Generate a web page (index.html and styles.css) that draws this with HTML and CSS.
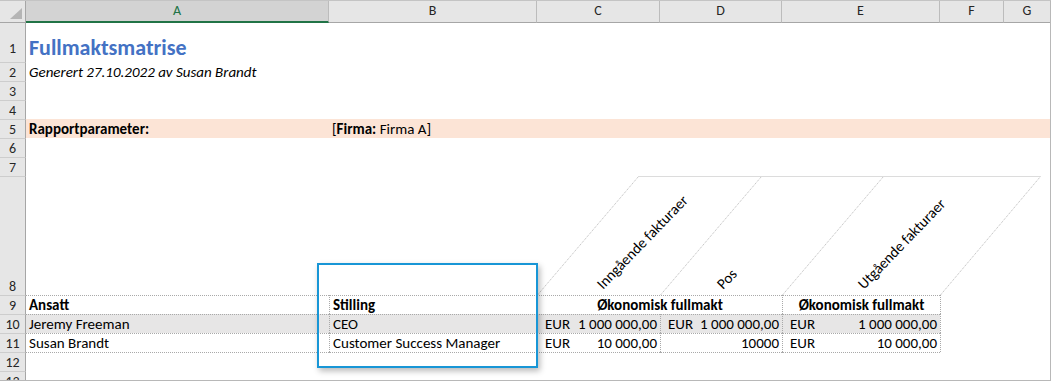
FILE: index.html
```html
<!DOCTYPE html>
<html lang="no">
<head>
<meta charset="utf-8">
<title>Fullmaktsmatrise</title>
<link rel="stylesheet" href="styles.css">
</head>
<body>
<div class="sheet">
  <div class="row hdr">
    <div class="corner"><span class="tri"></span></div>
    <div class="ch sel">A</div>
    <div class="ch">B</div>
    <div class="ch">C</div>
    <div class="ch">D</div>
    <div class="ch">E</div>
    <div class="ch">F</div>
    <div class="ch last">G</div>
  </div>

  <div class="row r1">
    <div class="rh first">1</div>
    <div class="c title span-rest">Fullmaktsmatrise</div>
  </div>
  <div class="row">
    <div class="rh">2</div>
    <div class="c italic span-rest">Generert 27.10.2022 av Susan Brandt</div>
  </div>
  <div class="row">
    <div class="rh">3</div>
  </div>
  <div class="row">
    <div class="rh">4</div>
  </div>
  <div class="row peach">
    <div class="rh">5</div>
    <div class="c bold">Rapportparameter:</div>
    <div class="c span-b-rest">[<b>Firma:</b>&nbsp;Firma A]</div>
  </div>
  <div class="row">
    <div class="rh">6</div>
  </div>
  <div class="row">
    <div class="rh">7</div>
  </div>
  <div class="row r8">
    <div class="rh">8</div>
    <div class="c"></div>
    <div class="c"></div>
    <svg class="diag" width="513" height="119" viewBox="0 0 513 119">
      <g class="dl">
        <line x1="0.5" y1="119" x2="101.5" y2="0.5"/>
        <line x1="123.5" y1="119" x2="224.5" y2="0.5"/>
        <line x1="245.5" y1="119" x2="346.5" y2="0.5"/>
        <line x1="403.5" y1="119" x2="503.5" y2="0.5"/>
        <line x1="101.5" y1="0.5" x2="503.5" y2="0.5"/>
      </g>
      <text x="66" y="114" transform="rotate(-46 66 114)">Inngående fakturaer</text>
      <text x="186" y="114" transform="rotate(-46 186 114)">Pos</text>
      <text x="327" y="114" transform="rotate(-46 327 114)">Utgående fakturaer</text>
    </svg>
  </div>
  <div class="row r9 tbl">
    <div class="rh">9</div>
    <div class="c bold ta">Ansatt</div>
    <div class="c bold ta bl">Stilling</div>
    <div class="c bold ta bl center span-cd">Økonomisk fullmakt</div>
    <div class="c bold ta bl center">Økonomisk fullmakt</div>
    <div class="c bl"></div>
  </div>
  <div class="row tbl grey">
    <div class="rh">10</div>
    <div class="c ta g">Jeremy Freeman</div>
    <div class="c ta bl g">CEO</div>
    <div class="c ta bl g m"><span>EUR</span><span>1 000 000,00</span></div>
    <div class="c ta bl g m"><span>EUR</span><span>1 000 000,00</span></div>
    <div class="c ta bl g m"><span>EUR</span><span>1 000 000,00</span></div>
    <div class="c bl"></div>
  </div>
  <div class="row tbl">
    <div class="rh">11</div>
    <div class="c ta">Susan Brandt</div>
    <div class="c ta bl">Customer Success Manager</div>
    <div class="c ta bl m"><span>EUR</span><span>10 000,00</span></div>
    <div class="c ta bl m"><span></span><span>10000</span></div>
    <div class="c ta bl m"><span>EUR</span><span>10 000,00</span></div>
    <div class="c bl"></div>
  </div>
  <div class="row">
    <div class="rh">12</div>
    <div class="c ta"></div>
    <div class="c ta"></div>
    <div class="c ta"></div>
    <div class="c ta"></div>
    <div class="c ta"></div>
  </div>
  <div class="row">
    <div class="rh">13</div>
  </div>

  <div class="highlight"></div>
</div>
</body>
</html>
```

FILE: styles.css
```css
:root {
  --cols: 26px 303px 208px 123px 122px 158px 64px 46px;
  --dot: #a9a9a9;
}

html, body {
  margin: 0;
  padding: 0;
  background: #ffffff;
}

.sheet {
  position: relative;
  width: 1051px;
  height: 381px;
  box-sizing: border-box;
  border-top: 1px solid #c4c4c4;
  border-right: 1px solid #b8b8b8;
  border-bottom: 1px solid #b8b8b8;
  overflow: hidden;
  font-family: Calibri, Carlito, Lato, "Liberation Sans", sans-serif;
  font-size: 15px;
  color: #000;
}

.row {
  display: grid;
  grid-template-columns: var(--cols);
  height: 19px;
}

.hdr {
  height: 21px;
}

.r1 { height: 40px; }
.r8 { height: 119px; }

/* column header */
.corner {
  position: relative;
  background: #e6e6e6;
  border-right: 1px solid #a6a6a6;
  border-bottom: 1px solid #a6a6a6;
  box-sizing: border-box;
}

.tri {
  position: absolute;
  right: 3px;
  bottom: 3px;
  width: 0;
  height: 0;
  border-left: 12px solid transparent;
  border-bottom: 11px solid #b5b5b5;
}

.ch {
  background: #e6e6e6;
  border-right: 1px solid #bcbcbc;
  border-bottom: 1px solid #a6a6a6;
  box-sizing: border-box;
  text-align: center;
  font-size: 14px;
  line-height: 20px;
  color: #262626;
}

.ch.last {
  border-right: none;
}

.ch.sel {
  background: #d3d3d3;
  color: #217346;
  border-bottom: 2px solid #217346;
}

/* row header */
.rh {
  display: flex;
  align-items: flex-end;
  justify-content: center;
  background: #e6e6e6;
  border-right: 1px solid #a6a6a6;
  border-top: 1px solid #cdcdcd;
  box-sizing: border-box;
  font-size: 14px;
  line-height: 17px;
  color: #262626;
}

.rh.first {
  border-top: none;
  padding-bottom: 5px;
}

/* cells */
.c {
  display: flex;
  align-items: flex-end;
  min-width: 0;
  padding: 0 3px 0 3px;
  box-sizing: border-box;
  white-space: nowrap;
  line-height: 18px;
}

.span-rest {
  grid-column: 2 / -1;
}

.span-b-rest {
  grid-column: 3 / -1;
}

.span-cd {
  grid-column: 4 / 6;
}

.title {
  font-size: 22px;
  font-weight: bold;
  color: #4472c4;
  line-height: 26px;
  padding-bottom: 1px;
}

.italic {
  font-style: italic;
}

.bold {
  font-weight: bold;
}

.peach .c {
  background: #fce4d6;
}

.ta {
  border-top: 1px dotted var(--dot);
}

.bl {
  border-left: 1px dotted var(--dot);
}

.center {
  justify-content: center;
}

.g {
  background: #e7e6e6;
}

.m {
  justify-content: space-between;
  padding-left: 7px;
}

/* rotated headers */
.diag {
  grid-column: 4 / 9;
  overflow: visible;
  display: block;
}

.dl line {
  stroke: #b9b9b9;
  stroke-width: 1;
  stroke-dasharray: 1 1;
}

.diag text {
  font-family: Calibri, Carlito, Lato, "Liberation Sans", sans-serif;
  font-size: 15px;
  fill: #000;
}

/* highlight frame */
.highlight {
  position: absolute;
  left: 317px;
  top: 262px;
  width: 221px;
  height: 105px;
  box-sizing: border-box;
  border: 2px solid #1896d6;
  box-shadow: 2px 3px 6px rgba(0, 0, 0, 0.28);
  pointer-events: none;
}
```
